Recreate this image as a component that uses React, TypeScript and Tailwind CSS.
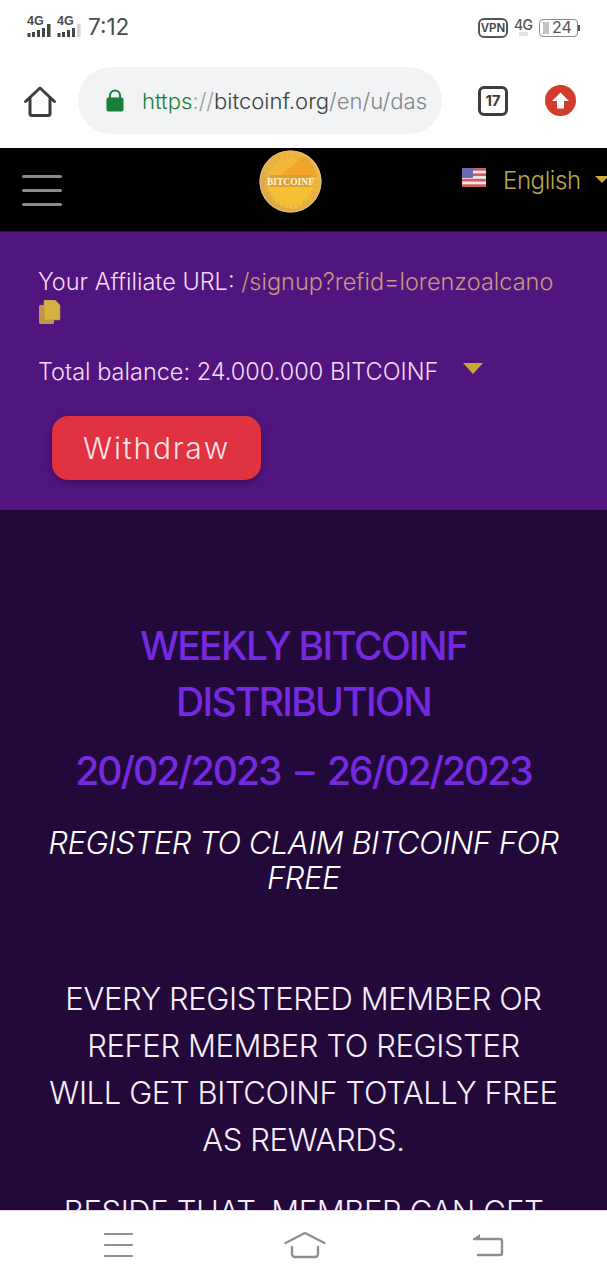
import React from "react";

const inter = "font-['Inter','Liberation_Sans',sans-serif]";

function Signal({ last }: { last?: boolean }) {
  return (
    <div className="relative w-[24px] h-[22px]">
      <span className="absolute left-0 -top-[1px] text-[12.500px] leading-[12px] font-bold text-[#4a4a4a] font-['Liberation_Sans',sans-serif]">4G</span>
      <svg width="24" height="22" className="absolute left-0 top-0">
        <rect x="0.500" y="17" width="3" height="4" fill="#444" />
        <rect x="5" y="16" width="3" height="5" fill="#444" />
        <rect x="10" y="14" width="3" height="7" fill="#444" />
        <rect x="15" y="12" width="3" height="9" fill="#444" />
        <rect x="20" y="8" width="3.500" height="13" fill={last ? "#d4d4d4" : "#444"} />
      </svg>
    </div>
  );
}

function StatusBar() {
  return (
    <div className={`h-[58px] bg-white flex items-start justify-between pl-[27px] pr-[27px] pt-[15px] ${inter}`}>
      <div className="flex items-center gap-[6px]">
        <Signal />
        <Signal last />
        <span className="text-[22.500px] leading-[24px] text-[#4b4b4b] ml-[1px]">7:12</span>
      </div>
      <div className="flex items-center gap-[6px] mt-[2px]">
        <span className="w-[30px] h-[20px] border-2 border-[#555] rounded-[6px] text-[11.500px] font-semibold leading-[16px] text-center text-[#444]">VPN</span>
        <span className="relative w-[19px] h-[22px] text-[14px] font-medium leading-[15px] text-[#555] -tracking-[0.8px]">
          4G
          <span className="absolute left-[5px] top-[15px] w-[9px] h-[4px] bg-[#e2e2e2]" />
        </span>
        <div className="flex items-center">
          <div className="relative w-[39px] h-[18px] border-[1.5px] border-[#8a8a8a] rounded-[4px] text-[16px] leading-[15px] text-[#555] pl-[12px]">
            <span className="absolute left-[3px] top-[1.5px] w-[6px] h-[12px] bg-[#c4c4c4]" />
            24
          </div>
          <span className="w-[2px] h-[6px] bg-[#555]" />
        </div>
      </div>
    </div>
  );
}

function Toolbar() {
  return (
    <div className={`h-[90px] bg-white flex items-start ${inter}`}>
      <svg width="34" height="34" viewBox="0 0 34 34" fill="none" className="ml-[23px] mt-[27px] shrink-0">
        <path d="M2.500 16.500 17 3l14.500 13.500M7 13v15.500a2 2 0 0 0 2 2h16a2 2 0 0 0 2-2V13" stroke="#3d3d3d" strokeWidth="3" strokeLinecap="round" strokeLinejoin="round" />
      </svg>
      <div className="ml-[21px] mt-[9px] w-[364px] h-[67px] rounded-full bg-[#f1f3f4] flex items-center pl-[28px] shrink-0">
        <svg width="18" height="23" viewBox="0 0 18 23" className="shrink-0">
          <path d="M4 9V6.500a5 5 0 0 1 10 0V9" fill="none" stroke="#188038" strokeWidth="2" />
          <rect x="0.500" y="8.500" width="17" height="14" rx="2" fill="#188038" />
        </svg>
        <div className="ml-[18px] text-[22.100px] leading-[30px] font-[350] whitespace-nowrap">
          <span className="text-[#188038]">https</span>
          <span className="text-[#9a9ea1]">://</span>
          <span className="text-[#3c4043]">bitcoinf.org</span>
          <span className="text-[#80868b]">/en/u/das</span>
        </div>
      </div>
      <div className="ml-[36px] mt-[28px] w-[30px] h-[30px] shrink-0 border-[3px] border-[#3d3d3d] rounded-[6px] text-[15px] font-bold leading-[24px] text-center text-[#3d3d3d]">17</div>
      <div className="ml-[37px] mt-[27px] w-[31px] h-[31px] shrink-0 rounded-full bg-[#d33b2c] flex items-center justify-center">
        <svg width="19" height="19" viewBox="0 0 19 19"><path d="M9.500 1.500 18 10h-5v7.500H6V10H1z" fill="#fff" /></svg>
      </div>
    </div>
  );
}

function Coin() {
  return (
    <svg width="63" height="63" viewBox="0 0 63 63" className="ml-[197px] mt-[2px] shrink-0">
      <defs>
        <radialGradient id="coin" cx="0.550" cy="0.450" r="0.600">
          <stop offset="0" stopColor="#f7b52a" />
          <stop offset="0.700" stopColor="#f0b63c" />
          <stop offset="1" stopColor="#cfa04a" />
        </radialGradient>
      </defs>
      <circle cx="31.500" cy="31.500" r="31" fill="url(#coin)" />
      <path d="M20 27 45 6a28 28 0 0 1 13 21z" fill="#f1a126" opacity="0.800" />
      <path d="M8 37h47L40 58a28 28 0 0 1-24-6z" fill="#f6c236" opacity="0.800" />
      <circle cx="31.500" cy="31.500" r="25" fill="none" stroke="#c9a35c" strokeWidth="5" strokeDasharray="2 3" opacity="0.350" />
      <circle cx="31.500" cy="31.500" r="30.500" fill="none" stroke="#dcc088" strokeWidth="1" />
      <rect x="11" y="25" width="41" height="12" fill="#d39a2c" opacity="0.700" />
      <text x="31.500" y="35" textAnchor="middle" fontSize="9.500" fontWeight="700" fontFamily="'Liberation Serif', serif" fill="#fff7dc">BITCOINF</text>
    </svg>
  );
}

function Header() {
  return (
    <div className={`h-[84px] bg-black border-b border-[#2a0e4a] flex items-start ${inter}`}>
      <div className="ml-[22px] mt-[27px] w-[40px] flex flex-col gap-[11px] shrink-0">
        <span className="h-[3px] bg-[#8a8a8a] rounded-full" />
        <span className="h-[3px] bg-[#8a8a8a] rounded-full" />
        <span className="h-[3px] bg-[#8a8a8a] rounded-full" />
      </div>
      <Coin />
      <svg width="24" height="19" viewBox="0 0 24 19" className="ml-[140px] mt-[20px] shrink-0">
        <rect width="24" height="19" fill="#f4e8ea" />
        <rect y="0" width="24" height="2.700" fill="#d05a60" />
        <rect y="5.400" width="24" height="2.700" fill="#d05a60" />
        <rect y="10.800" width="24" height="2.700" fill="#d05a60" />
        <rect y="16.300" width="24" height="2.700" fill="#d05a60" />
        <rect width="11" height="10" fill="#6a6ab8" />
      </svg>
      <span className="ml-[17px] mt-[18px] text-[24px] leading-[30px] font-light text-[#b9a74e] -tracking-[0.4px] shrink-0">English</span>
      <span className="ml-[14px] mt-[28px] shrink-0 w-0 h-0 border-l-[7px] border-r-[7px] border-t-[7px] border-l-transparent border-r-transparent border-t-[#c9aa3a]" />
    </div>
  );
}

function Affiliate() {
  return (
    <div className={`h-[278px] bg-[#50157f] ${inter} pl-[39px] pt-[35px]`}>
      <div className="-ml-[1px] text-[23.500px] leading-[30px] font-[350] text-[#f3dcf6] whitespace-nowrap">
        Your Affiliate URL: <span className="text-[#c79a7a]">/signup?refid=lorenzoalcano</span>
      </div>
      <svg width="22" height="24" viewBox="0 0 22 24" className="mt-[3px]">
        <rect x="0" y="5" width="15" height="19" rx="1.500" fill="#c0974a" />
        <path d="M5 1a1 1 0 0 1 1-1h10l5 5v14a1 1 0 0 1-1 1H6a1 1 0 0 1-1-1z" fill="#d3b144" stroke="#b58a3e" strokeWidth="0.600" />
      </svg>
      <div className="mt-[33px] -ml-[1px] flex items-center">
        <span className="text-[23.500px] leading-[30px] font-[350] text-[#f3dcf6] whitespace-nowrap">Total balance: 24.000.000 BITCOINF</span>
        <span className="ml-[25px] -mt-[7px] w-0 h-0 border-l-[10px] border-r-[10px] border-t-[11px] border-l-transparent border-r-transparent border-t-[#c9a62f]" />
      </div>
      <button className="ml-[13px] mt-[29px] w-[209px] h-[64px] rounded-[16px] bg-[#e03241] shadow-[0_3px_6px_rgba(40,0,60,0.5)] text-[30px] leading-[36px] font-[350] text-[#fbe3e6] tracking-[1.800px] font-['Inter',sans-serif]">
        Withdraw
      </button>
    </div>
  );
}

function Content() {
  return (
    <div className={`flex-1 min-h-0 overflow-hidden bg-[#23093a] text-center ${inter}`}>
      <div className="pt-[108px] px-[40px] text-[39px] leading-[56px] font-medium text-[#7629e0] -tracking-[1.700px]">
        WEEKLY BITCOINF<br />DISTRIBUTION
      </div>
      <div className="mt-[13px] text-[39px] leading-[56px] font-medium text-[#7629e0] -tracking-[1.950px] [word-spacing:6px]">20/02/2023 – 26/02/2023</div>
      <div className="mt-[26px] px-[30px] text-[31px] leading-[35px] font-[350] italic text-white -tracking-[0.500px]">
        REGISTER TO CLAIM BITCOINF FOR<br />FREE
      </div>
      <div className="mt-[80px] text-[31px] leading-[47px] font-[350] text-[#f7eefa] -tracking-[0.400px]">
        EVERY REGISTERED MEMBER OR<br />REFER MEMBER TO REGISTER<br />WILL GET BITCOINF TOTALLY FREE<br />AS REWARDS.
      </div>
      <div className="mt-[25px] text-[31px] leading-[47px] font-[350] text-[#f7eefa] -tracking-[0.400px] whitespace-nowrap">BESIDE THAT, MEMBER CAN GET</div>
    </div>
  );
}

function BottomNav() {
  return (
    <div className="h-[70px] bg-white border-t border-[#e8d8ee] flex items-start">
      <svg width="30" height="26" viewBox="0 0 30 26" fill="none" className="ml-[104px] mt-[21px]">
        <path d="M1 2h27M1 13h27M1 24h27" stroke="#8f8f8f" strokeWidth="2.200" strokeLinecap="round" />
      </svg>
      <svg width="42" height="28" viewBox="0 0 42 28" fill="none" className="ml-[150px] mt-[20px]">
        <path d="M1.500 12 21 2l19.500 10M8 16v7a3 3 0 0 0 3 3h20a3 3 0 0 0 3-3v-7" stroke="#8f8f8f" strokeWidth="2.400" strokeLinecap="round" strokeLinejoin="round" />
      </svg>
      <svg width="32" height="26" viewBox="0 0 32 26" fill="none" className="ml-[146px] mt-[21px]">
        <path d="M2 7h26a2 2 0 0 1 2 2v12a2 2 0 0 1-2 2H6" stroke="#8f8f8f" strokeWidth="2.400" strokeLinecap="round" strokeLinejoin="round" />
        <path d="M8 2 1 7l7 1z" fill="#8f8f8f" />
      </svg>
    </div>
  );
}

export default function App() {
  return (
    <div className="w-[607px] h-[1280px] flex flex-col overflow-hidden bg-white">
      <StatusBar />
      <Toolbar />
      <Header />
      <Affiliate />
      <Content />
      <BottomNav />
    </div>
  );
}
